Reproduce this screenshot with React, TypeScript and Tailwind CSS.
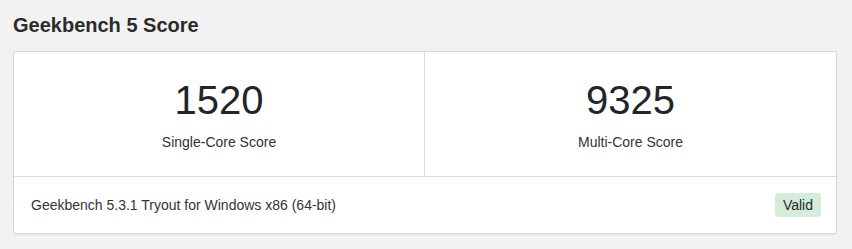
const scores = [
  { value: "1520", label: "Single-Core Score" },
  { value: "9325", label: "Multi-Core Score" },
];

export default function App() {
  return (
    <div className="min-h-[249px] bg-[#f2f2f2] px-[13px] pt-[11px] font-['Liberation_Sans',Arial,sans-serif] text-[#212529]">
      <h2 className="mb-3 text-[20px] font-bold leading-7 text-[#2b2b2b]">Geekbench 5 Score</h2>
      <div className="w-[824px] rounded-[3px] border border-[#d6d6d6] bg-white shadow-[0_1px_2px_rgba(0,0,0,0.06)]">
        <div className="grid grid-cols-2 border-b border-[#dcdcdc]">
          {scores.map((s, i) => (
            <div
              key={s.label}
              className={`flex flex-col items-center gap-2 py-6 ${i === 0 ? "border-r border-[#dcdcdc]" : ""}`}
            >
              <div className="text-[40px] leading-[48px] text-[#212529]">{s.value}</div>
              <div className="text-sm leading-5 text-[#333]">{s.label}</div>
            </div>
          ))}
        </div>
        <div className="flex h-[56px] items-center justify-between pl-[17px] pr-[15px]">
          <span className="text-sm leading-5 text-[#333]">Geekbench 5.3.1 Tryout for Windows x86 (64-bit)</span>
          <span className="rounded bg-[#d4edda] px-2 py-0.5 text-sm leading-5 text-[#1e2a1f]">Valid</span>
        </div>
      </div>
    </div>
  );
}
